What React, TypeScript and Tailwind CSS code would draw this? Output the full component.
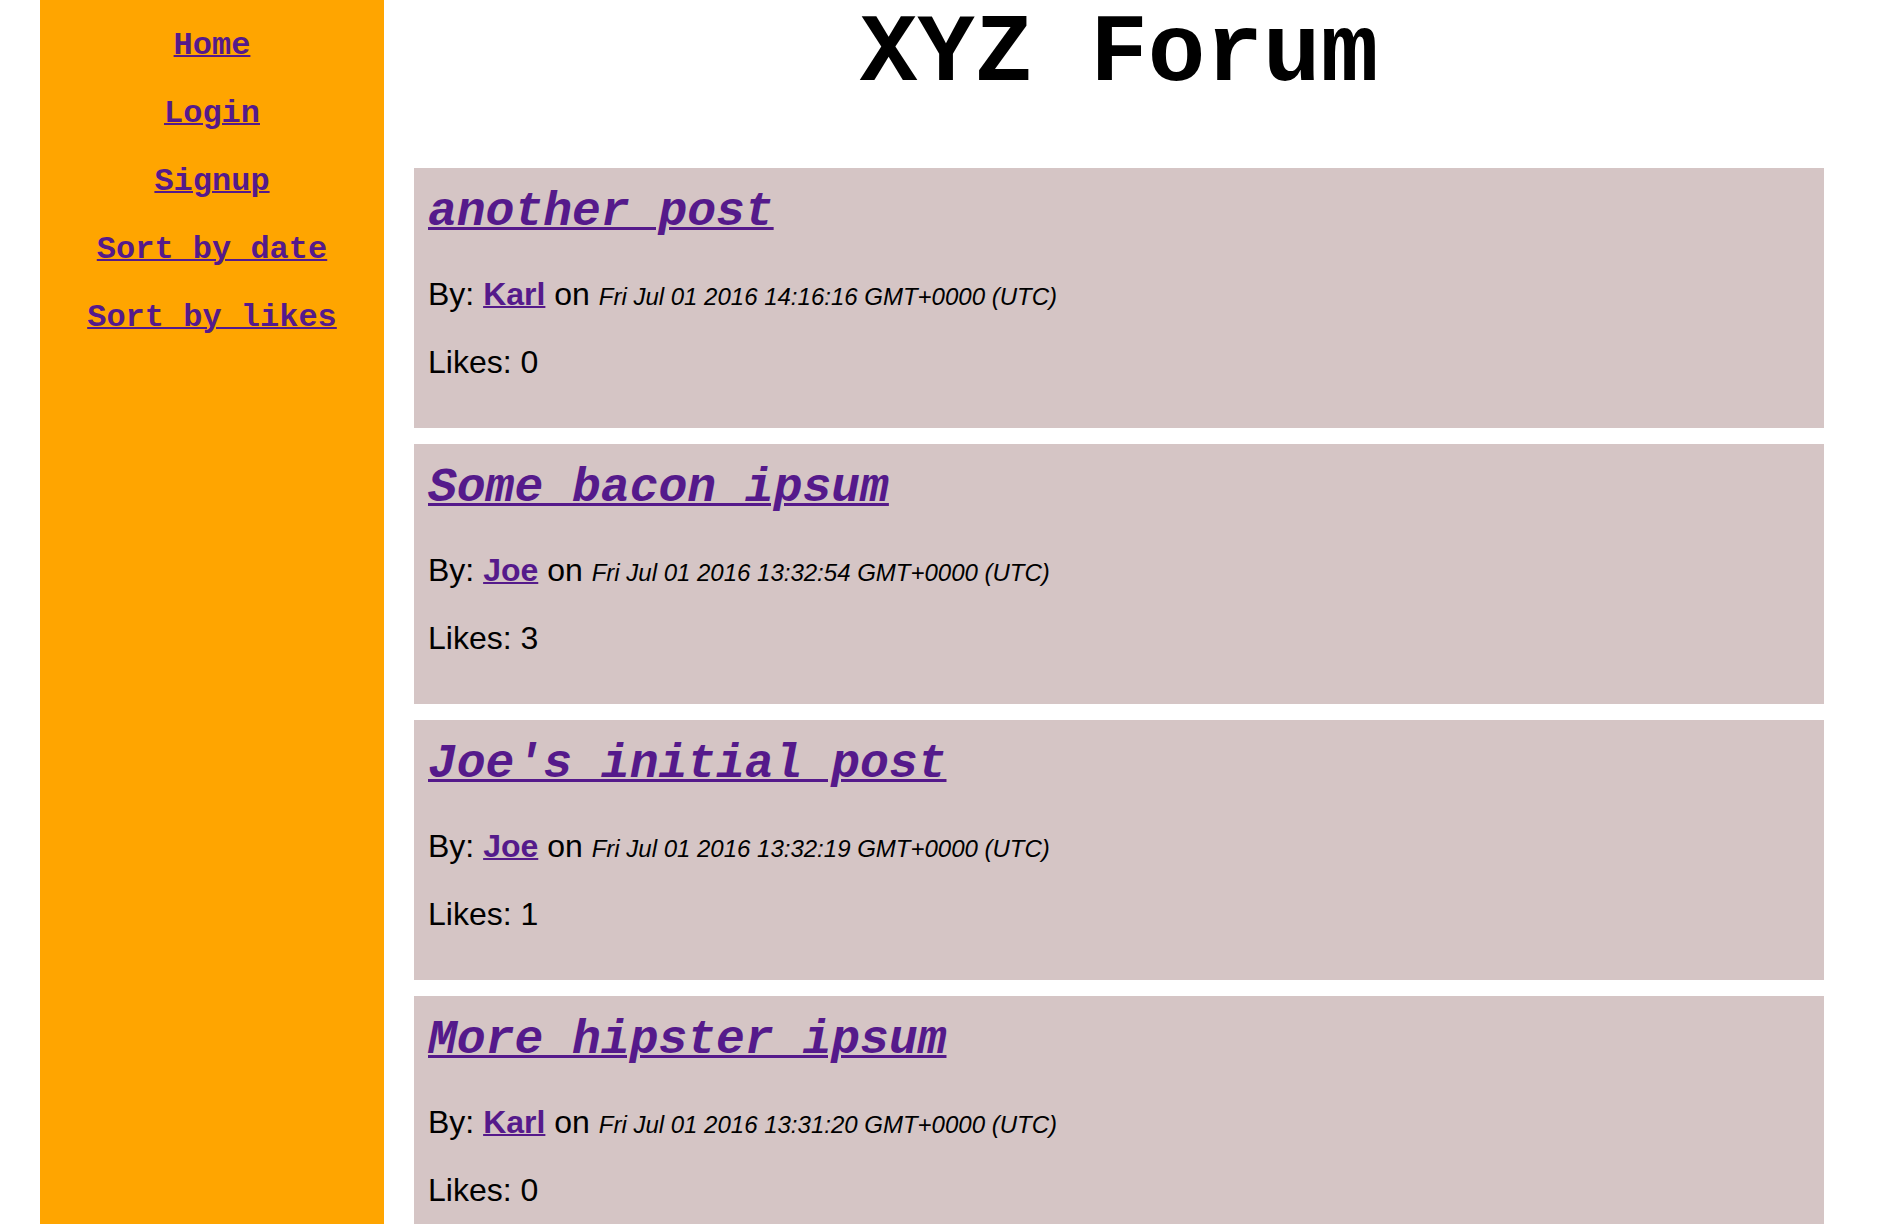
const posts = [
  {
    title: "another post",
    author: "Karl",
    date: "Fri Jul 01 2016 14:16:16 GMT+0000 (UTC)",
    likes: 0,
  },
  {
    title: "Some bacon ipsum",
    author: "Joe",
    date: "Fri Jul 01 2016 13:32:54 GMT+0000 (UTC)",
    likes: 3,
  },
  {
    title: "Joe's initial post",
    author: "Joe",
    date: "Fri Jul 01 2016 13:32:19 GMT+0000 (UTC)",
    likes: 1,
  },
  {
    title: "More hipster ipsum",
    author: "Karl",
    date: "Fri Jul 01 2016 13:31:20 GMT+0000 (UTC)",
    likes: 0,
  },
];

const navLinks = ["Home", "Login", "Signup", "Sort by date", "Sort by likes"];

const mono = "font-['Liberation_Mono','Courier_New',monospace]";
const sans = "font-['Liberation_Sans',Arial,Helvetica,sans-serif]";

function Sidebar() {
  return (
    <nav className="ml-[40px] w-[344px] shrink-0 bg-[#ffa500] min-h-screen">
      <ul className="flex flex-col items-center gap-[32px] pt-[28px]">
        {navLinks.map((link) => (
          <li key={link} className={`${mono} text-[32px] font-bold leading-[36px]`}>
            <a href="#" className="text-[#551a8b] underline decoration-[2px]">
              {link}
            </a>
          </li>
        ))}
      </ul>
    </nav>
  );
}

function Post({ post }: { post: (typeof posts)[number] }) {
  return (
    <div className="bg-[#d5c5c5] px-[14px] pt-[14px] pb-[14px]">
      <h2 className={`${mono} text-[48px] font-bold italic mt-[3px] mb-[37px] leading-[54px]`}>
        <a href="#" className="text-[#551a8b] underline decoration-[3px]">
          {post.title}
        </a>
      </h2>
      <p className={`${sans} text-[32px] leading-[37px] mb-[31px] text-black`}>
        By:{" "}
        <a href="#" className="font-bold text-[#551a8b] underline decoration-[2px]">
          {post.author}
        </a>{" "}
        on <em className="text-[24px] leading-[24px]">{post.date}</em>
      </p>
      <p className={`${sans} text-[32px] leading-[37px] mb-[33px] text-black`}>
        Likes: {post.likes}
      </p>
    </div>
  );
}

export default function App() {
  return (
    <div className="flex bg-white min-h-screen">
      <Sidebar />
      <main className="ml-[30px] w-[1410px]">
        <h1
          className={`${mono} text-[96px] font-bold leading-[109px] text-center text-black mb-[59px]`}
        >
          XYZ Forum
        </h1>
        <div className="flex flex-col gap-[16px]">
          {posts.map((post) => (
            <Post key={post.title} post={post} />
          ))}
        </div>
      </main>
    </div>
  );
}
